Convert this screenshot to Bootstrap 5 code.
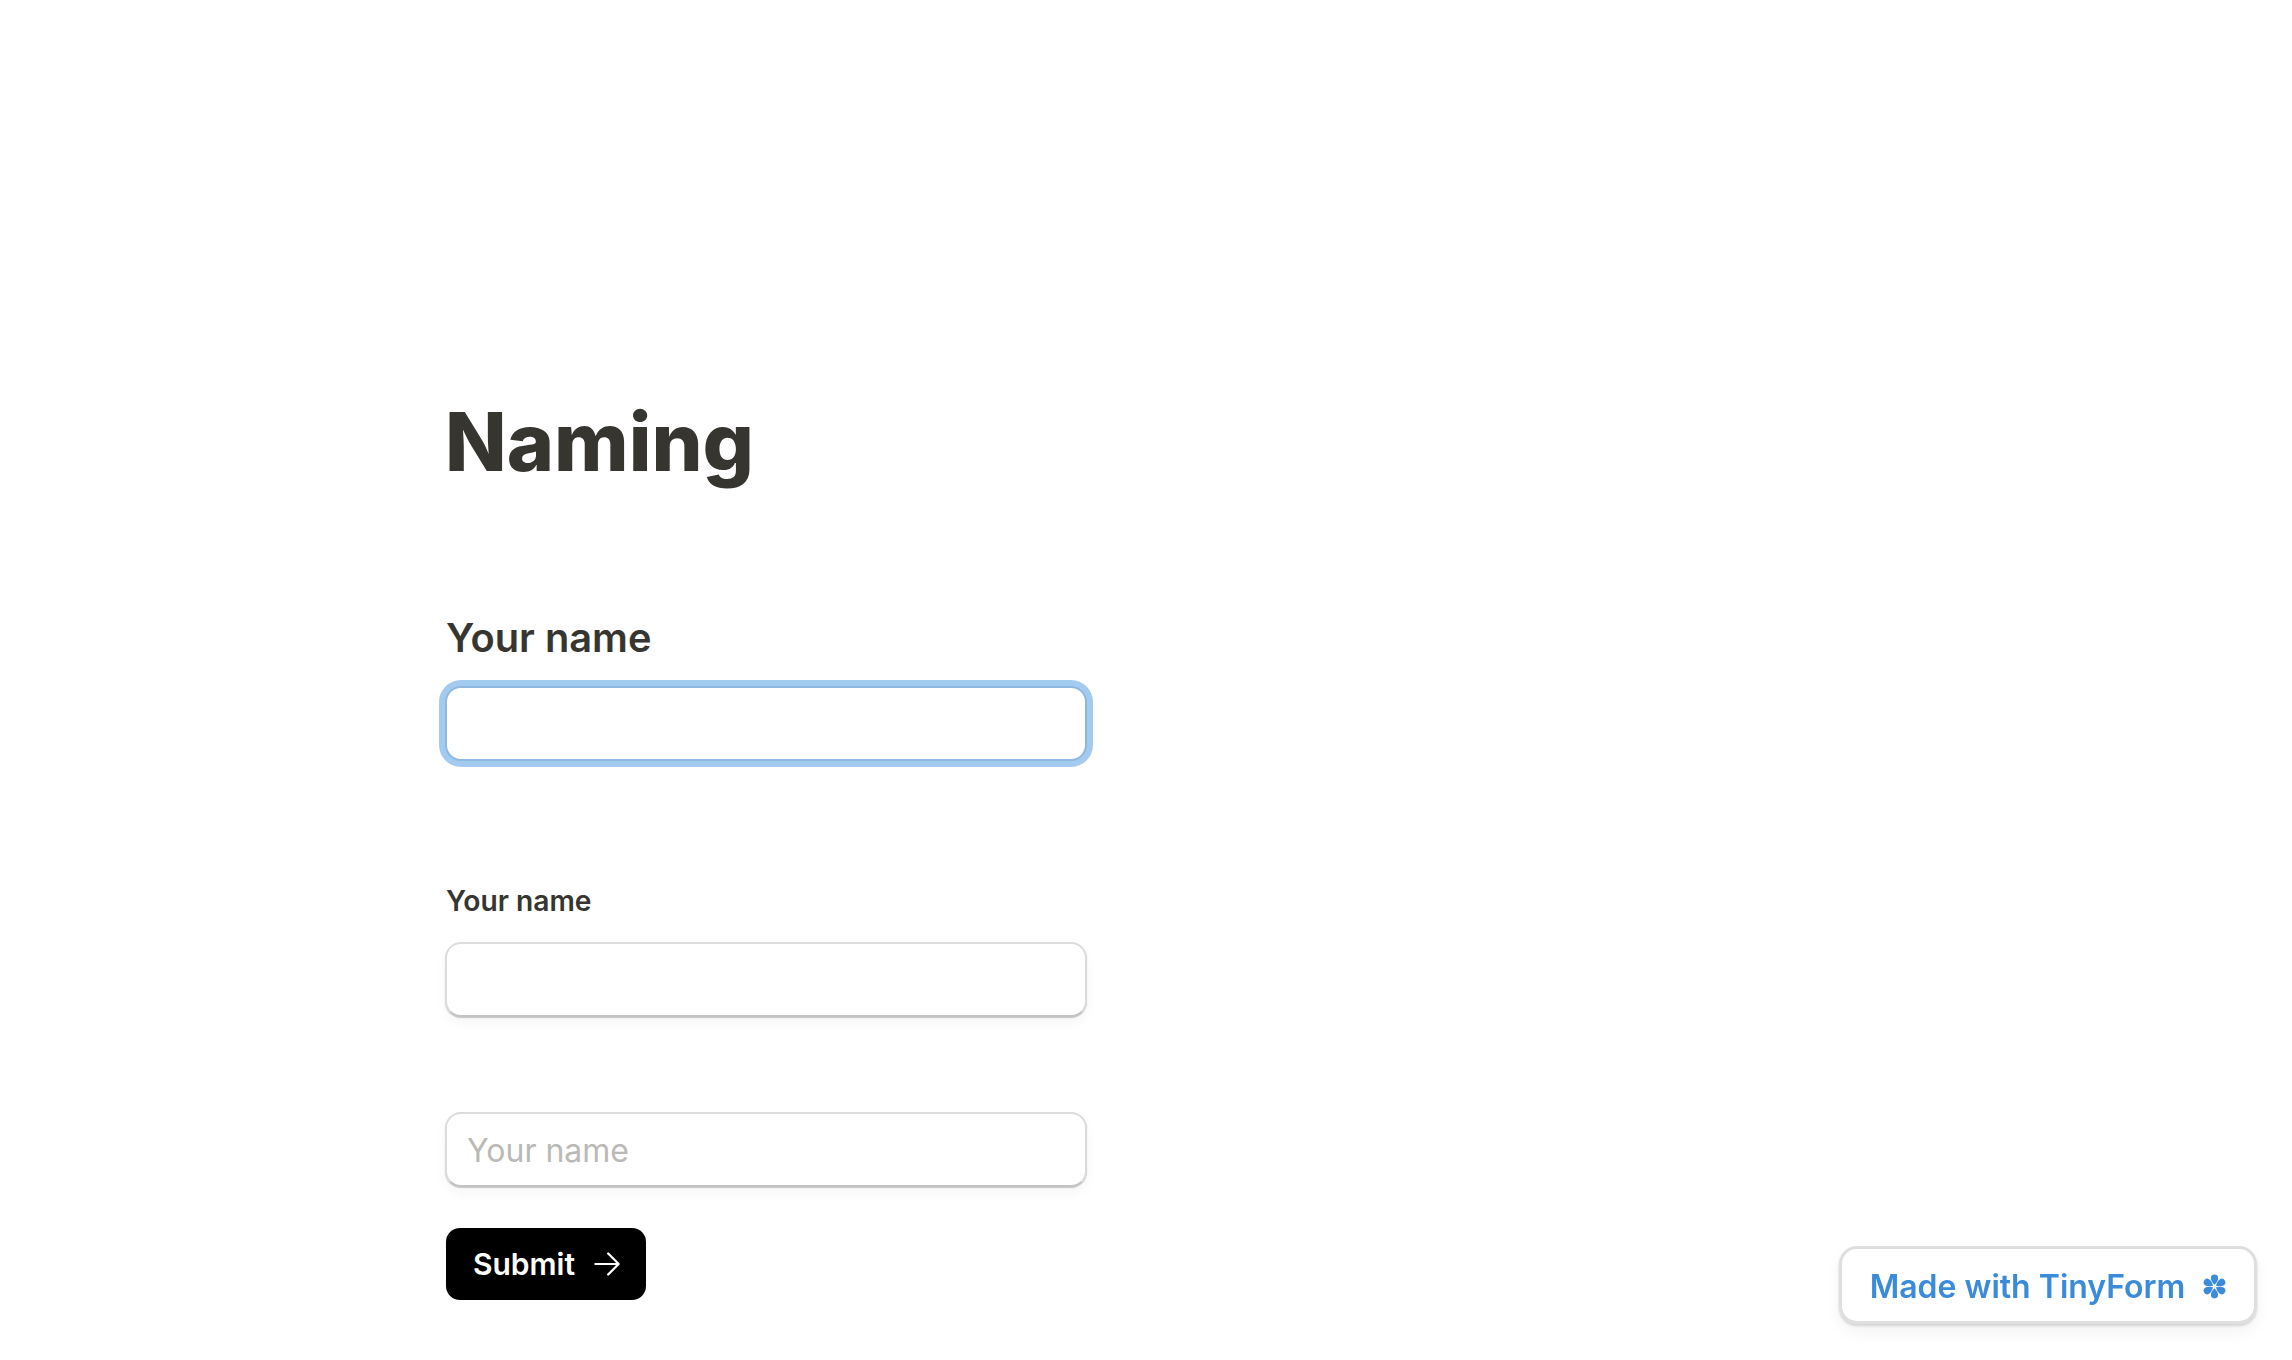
<!doctype html>
<html lang="en"><head><meta charset="utf-8"><title>Naming</title>
<link href="https://cdn.jsdelivr.net/npm/bootstrap@5.3.0/dist/css/bootstrap.min.css" rel="stylesheet">
<style>
body{background:#fff;font-family:Inter,"Liberation Sans",sans-serif;color:#37352f;height:1360px;overflow:hidden}
.page-wrap{width:642px;margin-left:445px;padding-top:394px}
.form-title{font-size:80.5px;font-weight:800;line-height:96px;margin:0 0 124px;color:#37352f}
.lbl-big{font-size:39.8px;font-weight:600;line-height:48px;margin-bottom:24px;padding-left:1px}
.lbl-small{font-size:28.2px;font-weight:600;line-height:34px;margin-top:123px;margin-bottom:24px;padding-left:1px}
.field{height:75px;border:2px solid #dcdcdb;border-bottom-color:#c4c4c3;border-radius:16px;box-shadow:0 1px 1px rgba(0,0,0,.2),0 6px 12px rgba(0,0,0,.04);font-size:32px;padding:2px 20px 0;color:#37352f}
.field::placeholder{color:#bbb9b5}
.field-focus{border-color:#8fb8e0;box-shadow:0 0 0 6px #a3cbef}
.field-spaced{margin-top:95px}
.send-btn{background:#000;color:#fff;border:0;border-radius:14px;height:72px;width:200px;padding-left:14px;font-size:30px;font-weight:600;margin-top:41px;margin-left:1px}
.send-gap{gap:18px}
.made-with{position:fixed;right:35px;bottom:36px;width:418px;height:78px;padding-top:3px;padding-left:2px;background:#fff;border:3px solid #dfdfdf;border-radius:18px;color:#3b8bdb;font-size:32px;font-weight:600;box-shadow:0 2px 3px rgba(0,0,0,.15),0 8px 16px rgba(0,0,0,.05)}
</style></head><body>
<div class="page-wrap">
<h1 class="form-title">Naming</h1>
<div class="lbl-big">Your name</div>
<input class="form-control field field-focus" type="text">
<div class="lbl-small">Your name</div>
<input class="form-control field" type="text">
<input class="form-control field field-spaced" type="text" placeholder="Your name">
<button class="btn send-btn send-gap d-flex align-items-center justify-content-center" type="button">Submit
<svg width="28" height="28" viewBox="0 0 24 24" fill="none" stroke="#fff" stroke-width="1.9" stroke-linecap="round" stroke-linejoin="round"><path d="M2 12h20M13 3l9 9-9 9"/></svg></button>
</div>
<div class="made-with d-flex align-items-center justify-content-center gap-3">Made with TinyForm
<svg width="27" height="27" viewBox="0 0 24 24" fill="#3b8bdb"><g id="petals"><path id="pt" d="M12 10.5C9.6 8 8.800 6.300 8.800 4.600a3.200 3.200 0 0 1 6.400 0C15.200 6.300 14.400 8 12 10.500Z"/><use href="#pt" transform="rotate(60 12 12)"/><use href="#pt" transform="rotate(120 12 12)"/><use href="#pt" transform="rotate(180 12 12)"/><use href="#pt" transform="rotate(240 12 12)"/><use href="#pt" transform="rotate(300 12 12)"/></g></svg></div>
</body></html>
